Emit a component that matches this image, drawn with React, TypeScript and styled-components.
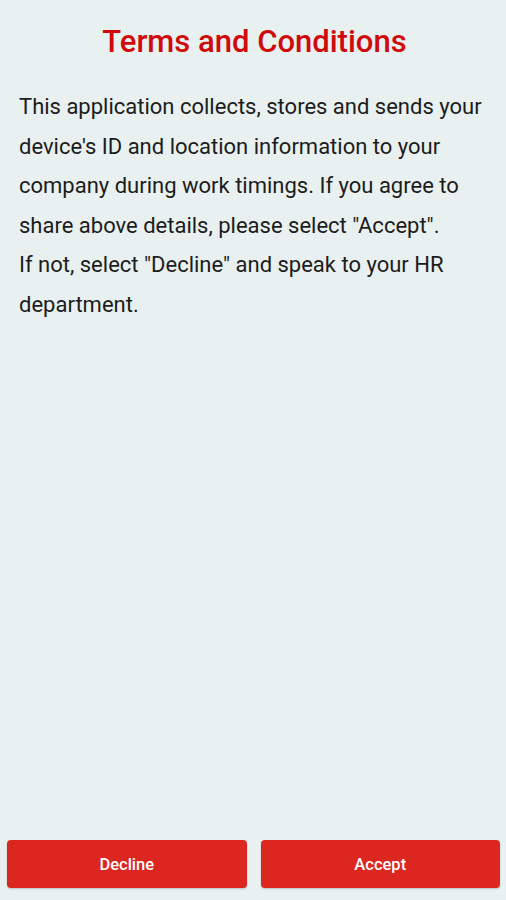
import * as React from "react";
import styled, { createGlobalStyle } from "styled-components";

const GlobalStyle = createGlobalStyle`
	html, body {
		margin: 0;
		padding: 0;
		background: #e9f0f0;
	}
	body {
		font-family: Roboto, "Noto Sans", sans-serif;
	}
`;

const Screen = styled.div`
	display: flex;
	flex-direction: column;
	height: 900px;
	background: #e9f0f0;
	box-sizing: border-box;
`;

const Content = styled.div`
	flex: 1;
	padding: 22px 16px 0 19px;
`;

const Title = styled.h1`
	margin: 0 0 25px;
	text-align: center;
	font-size: 31px;
	font-weight: 500;
	color: #d00a0a;
	line-height: 40px;
`;

const Body = styled.p`
	margin: 0;
	font-size: 22px;
	line-height: 39.6px;
	color: #1c1c1c;
`;

const ButtonRow = styled.div`
	display: flex;
	gap: 14px;
	padding: 0 6px 12px 7px;
`;

const Button = styled.button`
	flex: 1;
	height: 48px;
	border: none;
	border-radius: 4px;
	background: #dc2620;
	color: #fff;
	font-family: Roboto, "Noto Sans", sans-serif;
	font-size: 16.5px;
	font-weight: 500;
	box-shadow: 0 1px 2px rgba(0, 0, 0, 0.2);
`;

export default function App() {
	return (
		<>
			<GlobalStyle />
			<Screen>
				<Content>
					<Title>Terms and Conditions</Title>
					<Body>
						This application collects, stores and sends your device's ID and location information to your
						company during work timings. If you agree to share above details, please select "Accept".
						<br />
						If not, select "Decline" and speak to your HR department.
					</Body>
				</Content>
				<ButtonRow>
					<Button>Decline</Button>
					<Button>Accept</Button>
				</ButtonRow>
			</Screen>
		</>
	);
}
